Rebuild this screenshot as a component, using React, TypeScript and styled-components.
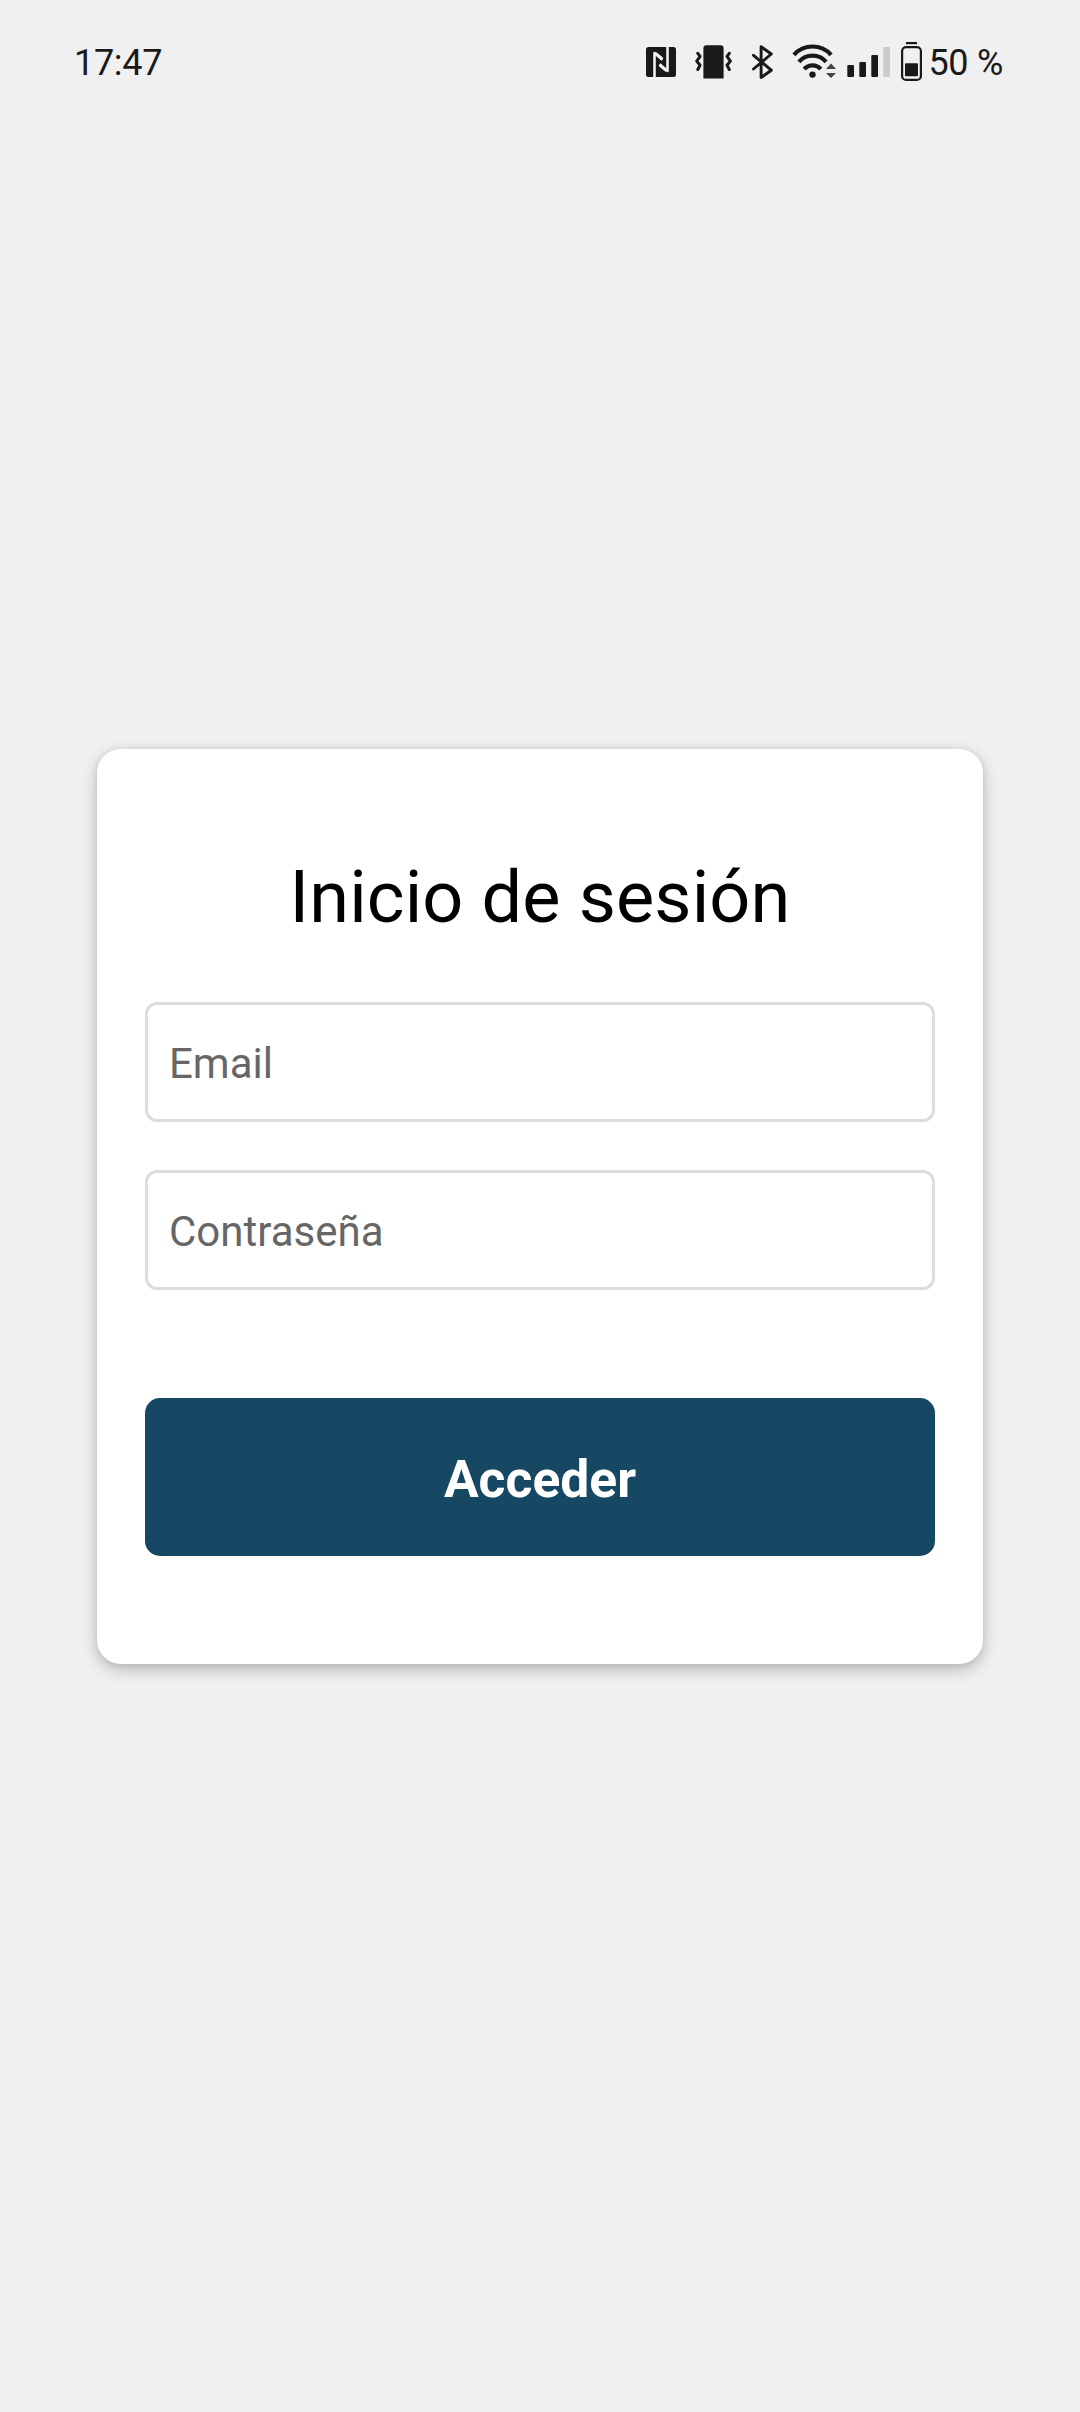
import React from "react";
import styled, { createGlobalStyle } from "styled-components";

const INK = "#191919";
const PAPER = "#f0f0f0";

const GlobalStyle = createGlobalStyle`
  body {
    margin: 0;
    background: ${PAPER};
    font-family: Roboto, "Noto Sans", sans-serif;
  }
  * { box-sizing: border-box; }
`;

const Screen = styled.div`
  display: flex;
  flex-direction: column;
  width: 1080px;
  height: 2412px;
  overflow: hidden;
  background: ${PAPER};
`;

const StatusBar = styled.header`
  display: flex;
  justify-content: space-between;
  align-items: center;
  height: 124px;
  padding: 0 77px 0 74px;
  color: ${INK};
  font-size: 36px;
  line-height: 42px;
`;

const StatusIcons = styled.div`
  display: flex;
  align-items: center;
`;

const Glyph = styled.svg<{ $gap: number }>`
  flex: none;
  display: block;
  margin-right: ${(p) => p.$gap}px;
`;

const StatusText = styled.span`
  padding-top: 2px;
  letter-spacing: -0.3px;
  white-space: pre;
`;

const Main = styled.main`
  display: flex;
  flex-direction: column;
  align-items: center;
  padding-top: 625px;
`;

const Card = styled.form`
  display: flex;
  flex-direction: column;
  width: 886px;
  height: 915px;
  padding: 107px 48px 0;
  border-radius: 24px;
  background: #fff;
  box-shadow: 0 6px 16px rgba(0, 0, 0, 0.21), 0 1px 10px rgba(0, 0, 0, 0.09);
`;

const Title = styled.h1`
  margin: 0 0 62px;
  color: #000;
  font-size: 72px;
  font-weight: 400;
  line-height: 84px;
  letter-spacing: 0.15px;
  text-align: center;
  white-space: nowrap;
`;

const Fields = styled.div`
  display: flex;
  flex-direction: column;
  gap: 48px;
  margin-bottom: 108px;
`;

const Field = styled.input`
  width: 100%;
  height: 120px;
  padding: 2px 21px 0;
  border: 3px solid #ddd;
  border-radius: 12px;
  outline: none;
  background: #fff;
  color: #000;
  font-family: inherit;
  font-size: 42px;
  &::placeholder {
    color: #666;
    opacity: 1;
  }
`;

const Submit = styled.button`
  height: 158px;
  padding: 5px 0 0;
  border: 0;
  border-radius: 15px;
  background: #174863;
  color: #fff;
  font-family: inherit;
  font-size: 51.6px;
  font-weight: 700;
  line-height: 60px;
`;

type StatusGlyphProps = { x: number; w: number; gap: number; children: React.ReactNode };

const StatusGlyph = ({ x, w, gap, children }: StatusGlyphProps) => (
  <Glyph $gap={gap} width={w} height={44} viewBox={`${x} 40 ${w} 44`} fill={INK}>
    {children}
  </Glyph>
);

export default function App() {
  return (
    <>
      <GlobalStyle />
      <Screen>
        <StatusBar>
          <StatusText>17:47</StatusText>
          <StatusIcons>
            <StatusGlyph x={646} w={30} gap={19}>
              <rect x="646" y="47" width="30" height="30" rx="2.5" />
              <g fill="none" stroke={PAPER} strokeWidth="2.6" strokeLinejoin="round">
                <path d="M654.5 77V53l8 6.7" />
                <path d="M667.5 47v24l-8-6.7" />
                <path d="M655.6 53.4l6.6 5.6M666.4 70.6l-6.6-5.6" strokeWidth="3" />
              </g>
            </StatusGlyph>
            <StatusGlyph x={695} w={37} gap={20}>
              <path d="M706.4 45.2h14.2a3 3 0 0 1 3 3v30.3h-20.2V48.2a3 3 0 0 1 3-3z" />
              <g fill="none" stroke={INK} strokeWidth="3" strokeLinecap="round" strokeLinejoin="round">
                <path d="M697.8 53.3l2.3 3-3.4 4.8 3.4 4.2-2.3 4.2" />
                <path d="M729.3 53.3l-2.3 3 3.4 4.8-3.4 4.2 2.3 4.2" />
              </g>
            </StatusGlyph>
            <StatusGlyph x={752} w={21} gap={19}>
              <path
                d="M753.5 55.3l17.8 14.9-10.2 7.3V46.7l10.2 7.3-17.8 15"
                fill="none"
                stroke={INK}
                strokeWidth="2.9"
                strokeLinecap="round"
                strokeLinejoin="round"
              />
            </StatusGlyph>
            <StatusGlyph x={792} w={45} gap={10}>
              <g fill="none" stroke={INK} strokeWidth="4.2">
                <path d="M793.9 54.8a25 25 0 0 1 37.2 0" />
                <path d="M798.9 61.8a18 18 0 0 1 27.2 0" />
                <path d="M804.2 69.2a10.8 10.8 0 0 1 16.6 0" />
              </g>
              <circle cx="812.5" cy="74.6" r="3.2" />
              <path d="M826 69l5-5.4 5 5.4zM826 73l5 5 5-5z" fill="#444" />
            </StatusGlyph>
            <StatusGlyph x={847} w={43} gap={11}>
              <rect x="847.3" y="65" width="6.7" height="12" rx="1" />
              <rect x="859.3" y="62" width="6.7" height="15" rx="1" />
              <rect x="871.3" y="55" width="6.7" height="22" rx="1" />
              <rect x="883.3" y="47" width="6.7" height="30" rx="1" fill="#cbcbcb" />
            </StatusGlyph>
            <StatusGlyph x={901} w={21} gap={6}>
              <rect x="906" y="42" width="11" height="2.2" />
              <rect x="902.1" y="47.1" width="18.8" height="32.8" rx="4" fill="none" stroke={INK} strokeWidth="2.2" />
              <rect x="905" y="63.3" width="13" height="13" rx="1" />
            </StatusGlyph>
            <StatusText>50 %</StatusText>
          </StatusIcons>
        </StatusBar>
        <Main>
          <Card onSubmit={(e) => e.preventDefault()}>
            <Title>Inicio de sesión</Title>
            <Fields>
              <Field type="email" placeholder="Email" />
              <Field type="password" placeholder="Contraseña" />
            </Fields>
            <Submit type="submit">Acceder</Submit>
          </Card>
        </Main>
      </Screen>
    </>
  );
}
